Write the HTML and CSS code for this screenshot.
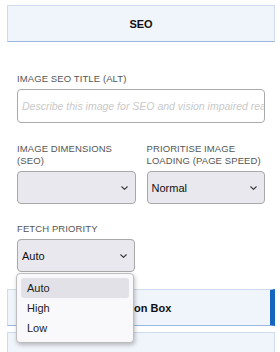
FILE: index.html
```html
<!DOCTYPE html>
<html lang="en">
<head>
    <meta charset="UTF-8">
    <meta name="viewport" content="width=device-width, initial-scale=1.0">
    <title>Image SEO</title>
    <link rel="stylesheet" href="styles.css">
</head>
<body>
    <div class="sidebar">
        <!-- SEO section -->
        <div class="section-tab">SEO</div>
        <div class="section-body">
            <div class="field">
                <label class="field-label">Image SEO Title (Alt)</label>
                <div class="text-input">Describe this image for SEO and vision impaired readers</div>
            </div>

            <div class="field-row">
                <div class="field">
                    <label class="field-label">Image Dimensions (SEO)</label>
                    <div class="select">
                        <span></span>
                        <svg class="chevron" width="7" height="4" viewBox="0 0 7 4"><path d="M0.5 0.5 L3.5 3.3 L6.5 0.5" fill="none" stroke="#333" stroke-width="1.1"/></svg>
                    </div>
                </div>
                <div class="field">
                    <label class="field-label">Prioritise Image Loading (Page Speed)</label>
                    <div class="select">
                        <span>Normal</span>
                        <svg class="chevron" width="7" height="4" viewBox="0 0 7 4"><path d="M0.5 0.5 L3.5 3.3 L6.5 0.5" fill="none" stroke="#333" stroke-width="1.1"/></svg>
                    </div>
                </div>
            </div>

            <div class="field field-half">
                <label class="field-label">Fetch Priority</label>
                <div class="select-wrap">
                    <div class="select">
                        <span>Auto</span>
                        <svg class="chevron" width="7" height="4" viewBox="0 0 7 4"><path d="M0.5 0.5 L3.5 3.3 L6.5 0.5" fill="none" stroke="#333" stroke-width="1.1"/></svg>
                    </div>
                    <!-- open dropdown list -->
                    <ul class="dropdown">
                        <li class="active">Auto</li>
                        <li>High</li>
                        <li>Low</li>
                    </ul>
                </div>
            </div>
        </div>

        <div class="section-tab selected">Caption Box</div>
        <div class="section-tab"></div>
    </div>
</body>
</html>
```

FILE: styles.css
```css
body {
    margin: 0;
    padding: 0;
    background-color: #fff;
    font-family: "Liberation Sans", Arial, sans-serif;
    color: #222;
}
.sidebar {
    padding: 5px 5px 0 7px;
}
.section-tab {
    height: 37px;
    box-sizing: border-box;
    background-color: #f0f4fb;
    border: 1px solid #cfdbef;
    border-bottom-color: #9bb8e3;
    display: flex;
    align-items: center;
    justify-content: center;
    font-size: 11px;
    font-weight: bold;
    color: #111;
    margin-bottom: 6px;
}
.section-tab.selected {
    border-right: 5px solid #1565c0;
}
.section-body {
    padding: 25px 10px 17px 10px;
}
.field {
    margin-top: 0;
}
.field-row {
    display: grid;
    grid-template-columns: 1fr 1fr;
    gap: 11px;
    margin-top: 20px;
}
.field-half {
    width: 118px;
    margin-top: 19px;
}
.field-label {
    display: block;
    font-size: 9.5px;
    line-height: 12px;
    text-transform: uppercase;
    letter-spacing: 0.1px;
    color: #555;
    margin-bottom: 4px;
}
.text-input {
    height: 34px;
    box-sizing: border-box;
    border: 1px solid #aaa;
    border-radius: 4px;
    padding: 0 4px;
    display: flex;
    align-items: center;
    font-size: 10.5px;
    font-style: italic;
    color: #c9c9c9;
    white-space: nowrap;
    overflow: hidden;
}
.select {
    height: 33px;
    box-sizing: border-box;
    background-color: #e9e8ee;
    border: 1px solid #a8a8a8;
    border-radius: 4px;
    padding: 0 7px 0 4px;
    display: flex;
    align-items: center;
    justify-content: space-between;
    font-size: 11px;
    color: #111;
}
.select-wrap {
    position: relative;
}
.dropdown {
    position: absolute;
    top: 34px;
    left: -1px;
    width: 118px;
    box-sizing: border-box;
    margin: 0;
    padding: 4px;
    list-style: none;
    background-color: #f9f9fb;
    border: 1px solid #bdbdbd;
    border-radius: 4px;
    box-shadow: 1px 2px 4px rgba(0, 0, 0, 0.25);
    z-index: 2;
}
.dropdown li {
    height: 20px;
    line-height: 20px;
    padding-left: 6px;
    font-size: 11px;
    color: #222;
    border-radius: 3px;
}
.dropdown li.active {
    background-color: #e2e1e7;
}
```
